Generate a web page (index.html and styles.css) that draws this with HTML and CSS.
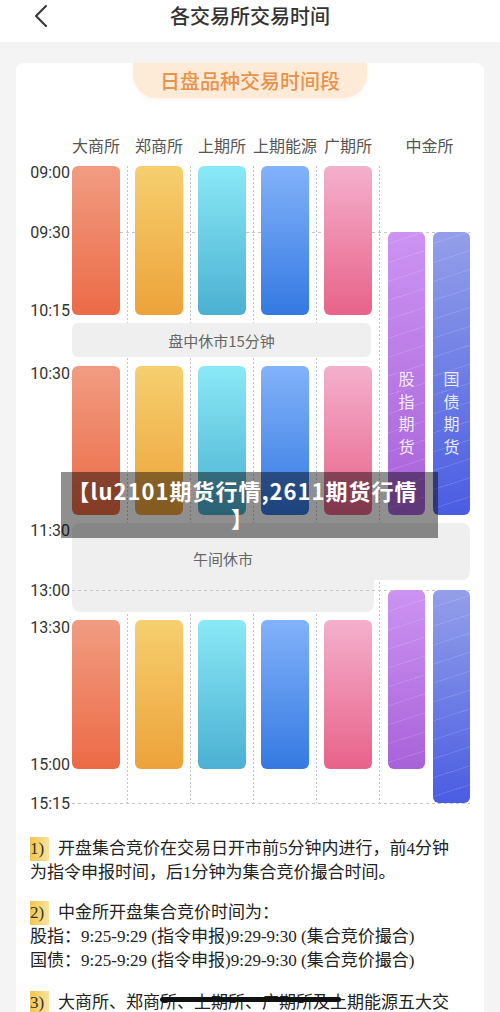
FILE: index.html
```html
<!DOCTYPE html>
<html lang="zh">
  <head>
    <meta charset="UTF-8" />
    <title>各交易所交易时间</title>
    <link rel="stylesheet" href="styles.css">
  </head>
  <body>
    <div class="page">
      <div class="topbar">
        <svg class="back" width="14" height="24" viewBox="0 0 14 24">
          <polyline points="12,2 2,12 12,22" fill="none" stroke="#333" stroke-width="2" stroke-linecap="round" stroke-linejoin="round" />
        </svg>
        <div class="title">各交易所交易时间</div>
      </div>

      <div class="content">
        <div class="card">
          <div class="pill">日盘品种交易时间段</div>

          <div class="chart">
            <!-- column headers -->
            <div class="head c2">大商所</div>
            <div class="head c3">郑商所</div>
            <div class="head c4">上期所</div>
            <div class="head c5">上期能源</div>
            <div class="head c6">广期所</div>
            <div class="head zj">中金所</div>

            <!-- time labels -->
            <div class="time t0900">09:00</div>
            <div class="time t0930">09:30</div>
            <div class="time t1015">10:15</div>
            <div class="time t1030">10:30</div>
            <div class="time t1130">11:30</div>
            <div class="time t1300">13:00</div>
            <div class="time t1330">13:30</div>
            <div class="time t1500">15:00</div>
            <div class="time t1515">15:15</div>

            <!-- grid lines -->
            <div class="sep c2"></div>
            <div class="sep c3"></div>
            <div class="sep c4"></div>
            <div class="sep c5"></div>
            <div class="sep c6"></div>
            <div class="hline h0930"></div>
            <div class="hline h1300"></div>
            <div class="hline h1515"></div>

            <!-- breaks -->
            <div class="brk brk1">盘中休市15分钟</div>
            <div class="brk brk2-top">午间休市</div>
            <div class="brk brk2-bottom"></div>

            <!-- bars -->
            <div class="bar dce c2 s1"></div>
            <div class="bar dce c2 s2"></div>
            <div class="bar dce c2 s3"></div>
            <div class="bar czce c3 s1"></div>
            <div class="bar czce c3 s2"></div>
            <div class="bar czce c3 s3"></div>
            <div class="bar shfe c4 s1"></div>
            <div class="bar shfe c4 s2"></div>
            <div class="bar shfe c4 s3"></div>
            <div class="bar ine c5 s1"></div>
            <div class="bar ine c5 s2"></div>
            <div class="bar ine c5 s3"></div>
            <div class="bar gfex c6 s1"></div>
            <div class="bar gfex c6 s2"></div>
            <div class="bar gfex c6 s3"></div>

            <div class="bar idx am"><span class="vtext">股指期货</span></div>
            <div class="bar idx pm"></div>
            <div class="bar bond am"><span class="vtext">国债期货</span></div>
            <div class="bar bond pm"></div>
          </div>

          <div class="notes">
            <p><span class="num">1)</span>开盘集合竞价在交易日开市前5分钟内进行，前4分钟为指令申报时间，后1分钟为集合竞价撮合时间。</p>
            <p><span class="num">2)</span>中金所开盘集合竞价时间为：<br>股指：9:25-9:29 (指令申报)9:29-9:30 (集合竞价撮合)<br>国债：9:25-9:29 (指令申报)9:29-9:30 (集合竞价撮合)</p>
            <p><span class="num">3)</span>大商所、郑商所、上期所、广期所及上期能源五大交易所</p>
          </div>
          <div class="scribble"></div>
        </div>
      </div>

      <div class="caption">【lu2101期货行情,2611期货行情<br>】</div>
    </div>
  </body>
</html>
```

FILE: styles.css
```css
body {
  margin: 0;
  font-family: "Noto Sans CJK SC", sans-serif;
  color: #333;
}
.page {
  position: relative;
  width: 500px;
  height: 1012px;
  overflow: hidden;
  background: #f4f4f4;
}

.topbar {
  height: 42px;
  background: white;
  display: flex;
  align-items: center;
  justify-content: center;
}
.back {
  position: absolute;
  left: 34px;
  top: 4px;
}
.title {
  font-size: 20px;
  font-weight: 500;
  color: #333;
  line-height: 28px;
  margin-top: -10px;
}

.content {
  padding: 21px 16px 0;
}
.card {
  position: relative;
  background: white;
  border-radius: 8px;
  height: 1100px;
}
.pill {
  width: 234px;
  height: 35px;
  margin: 0 auto;
  background: #fdebd8;
  border-radius: 0 0 24px 24px;
  box-shadow: 0 2px 4px rgba(240, 180, 120, 0.15);
  text-align: center;
  line-height: 35px;
  font-size: 20px;
  font-weight: 500;
  color: #e8924a;
}

.chart {
  margin-top: 32px;
  display: grid;
  grid-template-columns: 56px repeat(5, 63px) 46px 38px;
  grid-template-rows: 36px 66px 83px 8px 34px 9px 149px 8px 57px 10px 22px 8px 149px 34px 14px;
}
.c2 { grid-column: 2; }
.c3 { grid-column: 3; }
.c4 { grid-column: 4; }
.c5 { grid-column: 5; }
.c6 { grid-column: 6; }

.head {
  grid-row: 1;
  width: 48px;
  align-self: start;
  margin-top: 5px;
  display: flex;
  justify-content: center;
  white-space: nowrap;
  font-size: 16px;
  line-height: 20px;
  color: #555;
}
.head.zj {
  grid-column: 7 / 9;
  width: auto;
  margin-left: 1px;
}

.time {
  grid-column: 1;
  justify-self: end;
  align-self: start;
  height: 0;
  margin-right: 2px;
  display: flex;
  align-items: center;
  font-family: Roboto, "Noto Sans CJK SC", sans-serif;
  font-size: 16px;
  color: #333;
}
.t0900 { grid-row: 2; margin-top: 6px; }
.t0930 { grid-row: 3; }
.t1015 { grid-row: 4; margin-top: -5px; }
.t1030 { grid-row: 7; margin-top: 7px; }
.t1130 { grid-row: 9; margin-top: 7px; }
.t1300 { grid-row: 11; }
.t1330 { grid-row: 13; margin-top: 7px; }
.t1500 { grid-row: 14; margin-top: -5px; }
.t1515 { grid-row: 15; }

.sep {
  grid-row: 2 / 15;
  justify-self: start;
  width: 1px;
  margin-left: 55px;
  background: repeating-linear-gradient(to bottom, #c2c2c2 0 2px, transparent 2px 4px);
  z-index: 0;
}
.hline {
  grid-column: 2 / 9;
  align-self: start;
  height: 1px;
  margin-right: 1px;
  background: repeating-linear-gradient(to right, #c6c6c6 0 3px, transparent 3px 6px);
  z-index: 2;
}
.h0930 { grid-row: 3; }
.h1300 { grid-row: 11; }
.h1515 { grid-row: 15; }

.brk {
  background: #efefef;
  z-index: 1;
  justify-self: start;
  font-size: 15px;
  color: #666;
}
.brk1 {
  grid-row: 5;
  grid-column: 2 / 7;
  width: 299px;
  border-radius: 6px;
  display: flex;
  align-items: center;
  justify-content: center;
}
.brk2-top {
  grid-row: 9;
  grid-column: 2 / 9;
  width: 398px;
  border-radius: 8px 8px 8px 0;
  box-sizing: border-box;
  padding: 14px 96px 0 0;
  display: flex;
  align-items: center;
  justify-content: center;
}
.brk2-bottom {
  grid-row: 10 / 12;
  grid-column: 2 / 7;
  width: 302px;
  border-radius: 0 0 8px 8px;
}

.bar {
  justify-self: start;
  width: 48px;
  border-radius: 6px;
  z-index: 3;
}
.s1 { grid-row: 2 / 4; }
.s2 { grid-row: 7; }
.s3 { grid-row: 13; }
.dce { background: linear-gradient(#f19c82, #ec6a45); }
.czce { background: linear-gradient(#f6cf6e, #eda23a); }
.shfe { background: linear-gradient(#8ae9f6, #4bb0d2); }
.ine { background: linear-gradient(#82b2f9, #3479e2); }
.gfex { background: linear-gradient(#f4b0cc, #e8628a); }

.idx,
.bond {
  width: 37px;
  display: flex;
  justify-content: center;
}
.idx {
  grid-column: 7;
  margin-left: 1px;
  background:
    repeating-linear-gradient(-18deg, transparent 0 17px, rgba(255, 255, 255, 0.13) 17px 18px),
    linear-gradient(#cc93f2, #a862d9);
}
.bond {
  grid-column: 8;
  background:
    repeating-linear-gradient(-18deg, transparent 0 17px, rgba(255, 255, 255, 0.13) 17px 18px),
    linear-gradient(#939fe9, #4a5de2);
}
.idx.am,
.bond.am { grid-row: 3 / 8; }
.idx.pm { grid-row: 11 / 14; }
.bond.pm { grid-row: 11 / 15; }
.vtext {
  width: 1em;
  margin-top: 135px;
  font-size: 16px;
  line-height: 22.5px;
  color: rgba(255, 255, 255, 0.88);
}

.notes {
  padding: 20px 28px 0 14px;
  font-family: "Liberation Serif", "Noto Sans CJK SC", serif;
  font-size: 17px;
  line-height: 24px;
  color: #222;
}
.notes p {
  margin: 0 0 16px;
}
.notes p:nth-child(2) {
  margin-bottom: 18px;
}
.num {
  display: inline-block;
  width: 19px;
  height: 24px;
  margin-right: 9px;
  background: linear-gradient(to right, #f1c64c, #fae3a0);
  color: #333;
}
.scribble {
  position: absolute;
  left: 144px;
  top: 934px;
  width: 181px;
  height: 5px;
  background: #111;
  border-radius: 3px;
  z-index: 4;
}

.caption {
  position: absolute;
  z-index: 10;
  left: 61px;
  top: 472px;
  width: 377px;
  box-sizing: border-box;
  padding: 5px 14px 7px 0;
  background: rgba(0, 0, 0, 0.44);
  color: white;
  font-size: 22px;
  font-weight: bold;
  letter-spacing: 1px;
  line-height: 27px;
  text-align: center;
  white-space: nowrap;
}
```
